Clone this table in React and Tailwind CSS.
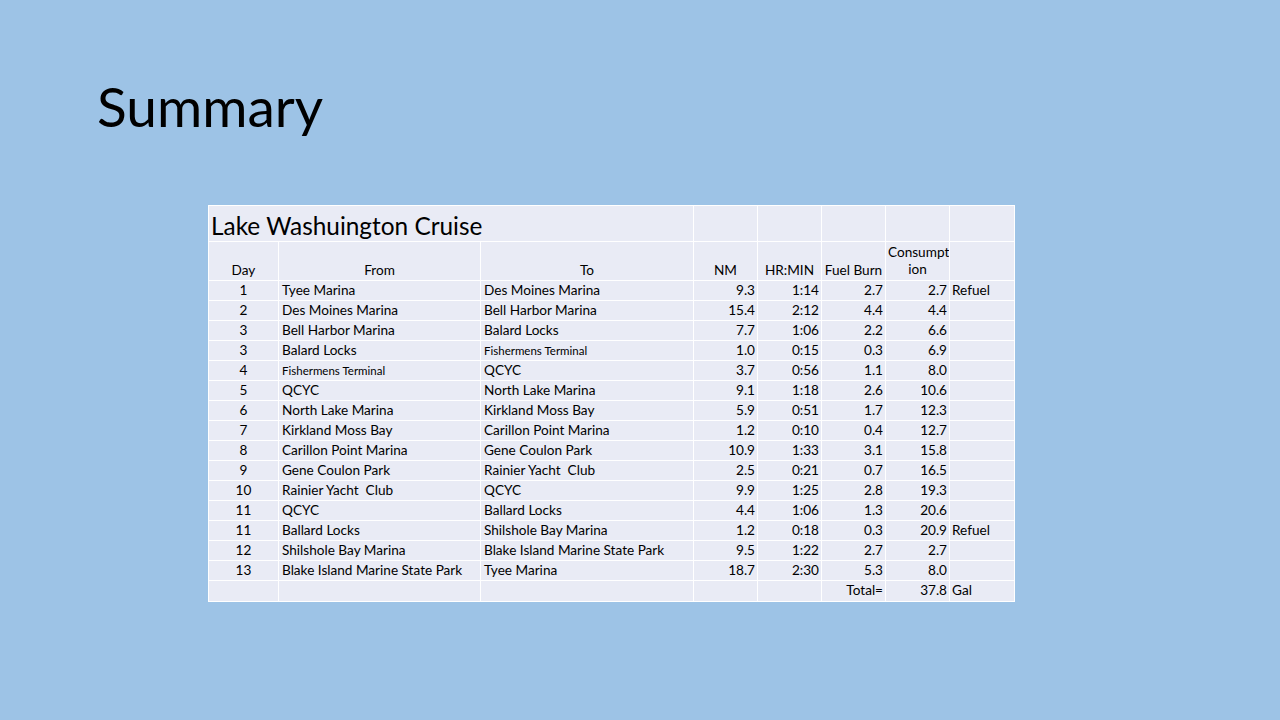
import React from "react";

const rows = [
  ["1", "Tyee Marina", "Des Moines Marina", "9.3", "1:14", "2.7", "2.7", "Refuel"],
  ["2", "Des Moines Marina", "Bell Harbor Marina", "15.4", "2:12", "4.4", "4.4", ""],
  ["3", "Bell Harbor Marina", "Balard Locks", "7.7", "1:06", "2.2", "6.6", ""],
  ["3", "Balard Locks", "Fishermens Terminal", "1.0", "0:15", "0.3", "6.9", ""],
  ["4", "Fishermens Terminal", "QCYC", "3.7", "0:56", "1.1", "8.0", ""],
  ["5", "QCYC", "North Lake Marina", "9.1", "1:18", "2.6", "10.6", ""],
  ["6", "North Lake Marina", "Kirkland Moss Bay", "5.9", "0:51", "1.7", "12.3", ""],
  ["7", "Kirkland Moss Bay", "Carillon Point Marina", "1.2", "0:10", "0.4", "12.7", ""],
  ["8", "Carillon Point Marina", "Gene Coulon Park", "10.9", "1:33", "3.1", "15.8", ""],
  ["9", "Gene Coulon Park", "Rainier Yacht  Club", "2.5", "0:21", "0.7", "16.5", ""],
  ["10", "Rainier Yacht  Club", "QCYC", "9.9", "1:25", "2.8", "19.3", ""],
  ["11", "QCYC", "Ballard Locks", "4.4", "1:06", "1.3", "20.6", ""],
  ["11", "Ballard Locks", "Shilshole Bay Marina", "1.2", "0:18", "0.3", "20.9", "Refuel"],
  ["12", "Shilshole Bay Marina", "Blake Island Marine State Park", "9.5", "1:22", "2.7", "2.7", ""],
  ["13", "Blake Island Marine State Park", "Tyee Marina", "18.7", "2:30", "5.3", "8.0", ""],
];

// small print in the original slide for this one place name
const small = (s) => s === "Fishermens Terminal";

const cell = "border border-white px-[2px] whitespace-pre overflow-hidden";

const App = () => {
  return (
    <div
      className="w-[1280px] h-[720px] bg-[#9dc3e6] text-black overflow-hidden"
      style={{ fontFamily: "Lato, 'Open Sans', sans-serif" }}
    >
      <h1 className="pl-[97px] pt-[76px] text-[55px] leading-[60px] font-normal">Summary</h1>

      <div className="pl-[208px] pt-[69px]">
        <table className="table-fixed border-collapse bg-[#e9ebf5] text-[13.6px] leading-none w-[806px]">
          <colgroup>
            <col className="w-[70px]" />
            <col className="w-[202px]" />
            <col className="w-[213px]" />
            <col className="w-[64px]" />
            <col className="w-[64px]" />
            <col className="w-[64px]" />
            <col className="w-[64px]" />
            <col className="w-[65px]" />
          </colgroup>
          <tbody>
            <tr className="h-[36px]">
              <td colSpan={3} className={`${cell} text-[24.4px] pt-[6px] border-r-0`}>
                Lake Washuington Cruise
              </td>
              <td className={cell}></td>
              <td className={cell}></td>
              <td className={cell}></td>
              <td className={cell}></td>
              <td className={cell}></td>
            </tr>
            <tr className="h-[39px] align-bottom">
              <td className={`${cell} text-center pb-[2px]`}>Day</td>
              <td className={`${cell} text-center pb-[2px]`}>From</td>
              <td className={`${cell} text-center pb-[2px]`}>To</td>
              <td className={`${cell} text-center pb-[2px]`}>NM</td>
              <td className={`${cell} text-center pb-[2px]`}>HR:MIN</td>
              <td className={`${cell} text-center pb-[2px]`}>Fuel Burn</td>
              <td className={`${cell} text-center pb-[2px] whitespace-normal leading-[17px]`}>
                Consumpt
                <br />
                ion
              </td>
              <td className={cell}></td>
            </tr>
            {rows.map((r, i) => (
              <tr key={i} className="h-[20px]">
                <td className={`${cell} text-center`}>{r[0]}</td>
                <td className={`${cell} pl-[3px] ${small(r[1]) ? "text-[11.5px]" : ""}`}>{r[1]}</td>
                <td className={`${cell} pl-[3px] ${small(r[2]) ? "text-[11.5px]" : ""}`}>{r[2]}</td>
                <td className={`${cell} text-right`}>{r[3]}</td>
                <td className={`${cell} text-right`}>{r[4]}</td>
                <td className={`${cell} text-right`}>{r[5]}</td>
                <td className={`${cell} text-right`}>{r[6]}</td>
                <td className={cell}>{r[7]}</td>
              </tr>
            ))}
            <tr className="h-[21px]">
              <td className={cell}></td>
              <td className={cell}></td>
              <td className={cell}></td>
              <td className={cell}></td>
              <td className={cell}></td>
              <td className={`${cell} text-right`}>Total=</td>
              <td className={`${cell} text-right`}>37.8</td>
              <td className={cell}>Gal</td>
            </tr>
          </tbody>
        </table>
      </div>
    </div>
  );
};

export default App;
